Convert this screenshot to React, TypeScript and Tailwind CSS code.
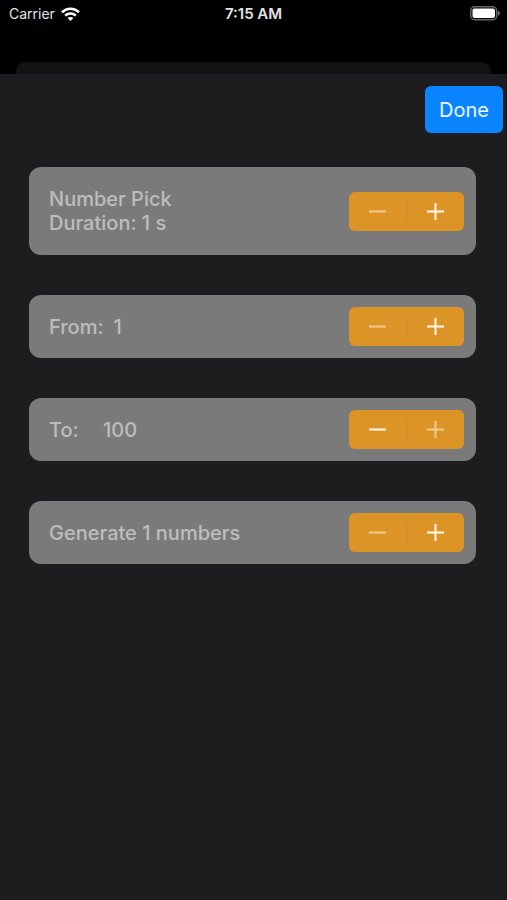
import { useState } from 'react';

interface StepperProps {
  label: string;
  value: number;
  min: number;
  max: number;
  onChange: (value: number) => void;
}

function Stepper({ label, value, min, max, onChange }: StepperProps) {
  return (
    <div
      role="group"
      aria-label={label}
      className="flex h-[39px] w-[115px] shrink-0 items-center rounded-md bg-[#dd9427] text-[#fffaf0]"
    >
      <button
        aria-label={`Decrease ${label}`}
        disabled={value <= min}
        onClick={() => onChange(value - 1)}
        className="flex h-full flex-1 items-center justify-center disabled:text-[#f2cc90]"
      >
        <svg width="17" height="17" viewBox="0 0 17 17" stroke="currentColor" strokeWidth="2">
          <path d="M0 8.5h17" />
        </svg>
      </button>
      <span className="h-[22px] w-px bg-[#c58a35]" />
      <button
        aria-label={`Increase ${label}`}
        disabled={value >= max}
        onClick={() => onChange(value + 1)}
        className="flex h-full flex-1 items-center justify-center disabled:text-[#f2cc90]"
      >
        <svg width="17" height="17" viewBox="0 0 17 17" stroke="currentColor" strokeWidth="2">
          <path d="M0 8.5h17M8.5 0v17" />
        </svg>
      </button>
    </div>
  );
}

function StatusBar() {
  return (
    <div className="grid h-[27px] grid-cols-3 items-center px-[7px] text-sm text-[#e4e4e4]">
      <div className="flex items-center gap-[6px] pl-[2px]">
        <span>Carrier</span>
        <svg width="19" height="14" viewBox="0 0 19 14" fill="none" stroke="#fff" strokeWidth="2.6">
          <path d="M1 5.2C5.8.6 13.2.6 18 5.2" />
          <path d="M4.2 8.6c3-2.8 7.6-2.8 10.6 0" />
          <path d="M9.5 14 6.6 11.1c1.6-1.4 4.2-1.4 5.8 0z" fill="#fff" stroke="none" />
        </svg>
      </div>
      <span className="text-center text-[15px] font-semibold whitespace-nowrap">7:15 AM</span>
      <svg className="justify-self-end" width="30" height="15" viewBox="0 0 30 15">
        <rect x="0.75" y="0.75" width="26" height="13" rx="4" fill="none" stroke="#666" strokeWidth="1.5" />
        <rect x="2.5" y="2.5" width="22.5" height="9.5" rx="2" fill="#fff" />
        <path d="M28 4.8c2.4.8 2.4 4.2 0 5z" fill="#777" />
      </svg>
    </div>
  );
}

export default function App() {
  const [duration, setDuration] = useState(1);
  const [from, setFrom] = useState(1);
  const [to, setTo] = useState(100);
  const [count, setCount] = useState(1);

  const card = 'flex items-center justify-between rounded-xl bg-[#7a7a7a] pr-3 pl-5';

  return (
    <div className="flex min-h-screen flex-col bg-black font-['Inter','Liberation_Sans',sans-serif]">
      <StatusBar />
      <div className="mx-4 mt-[35px] h-3 rounded-t-[10px] bg-[#131314]" />
      <main className="flex-1 bg-[#1d1d1f]">
        <div className="flex justify-end pt-3 pr-1">
          <button className="h-[47px] rounded-md bg-[#0a84ff] px-[14px] text-xl text-[#f0f8ff]">Done</button>
        </div>
        <div className="mt-[34px] mr-[31px] ml-[29px] flex flex-col gap-10 text-xl leading-6 font-medium text-[#bdbdbd]">
          <section className={`${card} py-5`}>
            <p>
              Number Pick
              <br />
              Duration: {duration} s
            </p>
            <Stepper label="duration" value={duration} min={1} max={10} onChange={setDuration} />
          </section>
          <section className={`${card} py-3`}>
            <p className="flex gap-[10px]">
              <span>From:</span>
              <span>{from}</span>
            </p>
            <Stepper label="from" value={from} min={1} max={to} onChange={setFrom} />
          </section>
          <section className={`${card} py-3`}>
            <p className="flex">
              <span className="w-[54px]">To:</span>
              <span>{to}</span>
            </p>
            <Stepper label="to" value={to} min={from} max={100} onChange={setTo} />
          </section>
          <section className={`${card} py-3`}>
            <p>Generate {count} numbers</p>
            <Stepper label="numbers" value={count} min={1} max={10} onChange={setCount} />
          </section>
        </div>
      </main>
    </div>
  );
}
